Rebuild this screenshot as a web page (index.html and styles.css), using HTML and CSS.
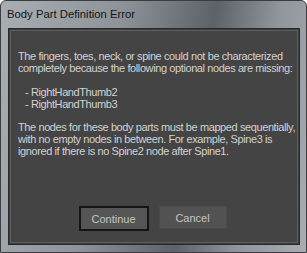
FILE: index.html
```html
<!DOCTYPE html>
<html lang="en">
<head>
    <meta charset="UTF-8">
    <title>Body Part Definition Error</title>
    <link rel="stylesheet" href="styles.css">
</head>
<body>

    <div class="window">
        <div class="titlebar">Body Part Definition Error</div>

        <div class="client">
            <div class="panel">
                <p>The fingers, toes, neck, or spine could not be characterized<br>completely because the following optional nodes are missing:</p>
                <ul class="missing">
                    <li>- RightHandThumb2</li>
                    <li>- RightHandThumb3</li>
                </ul>
                <p>The nodes for these body parts must be mapped sequentially,<br>with no empty nodes in between. For example, Spine3 is<br>ignored if there is no Spine2 node after Spine1.</p>

                <div class="buttons">
                    <button class="default">Continue</button>
                    <button>Cancel</button>
                </div>
            </div>
        </div>
    </div>

</body>
</html>
```

FILE: styles.css
```css
body {
    margin: 0;
    background: #ffffff;
    font-family: "Liberation Sans", sans-serif;
}
/* Outer window frame */
.window {
    width: 305px;
    height: 251px;
    border: 1px solid #3a3e42;
    border-radius: 6px 6px 0 0;
    background: linear-gradient(100deg, #a9aeb3 0%, #8d9399 35%, #5c6268 62%, #8f959b 80%, #a8adb2 100%);
    display: flex;
    flex-direction: column;
}
.titlebar {
    height: 27px;
    line-height: 26px;
    padding-left: 6px;
    font-size: 11.3px;
    color: #141414;
}
.client {
    flex: 1;
    margin: 0 6px 7px 7px;
    border: 1px solid #2a2b2c;
    background: #3c3c3c;
    padding: 1px;
}
.panel {
    height: 100%;
    box-sizing: border-box;
    border: 1px solid #5e5e5e;
    background: #444444;
    padding: 19px 0 0 7px;
    font-size: 11px;
    line-height: 12px;
    letter-spacing: -0.4px;
    white-space: nowrap; /* lines are broken by hand */
    color: #d2d2d2;
    display: flex;
    flex-direction: column;
}
.panel p {
    margin: 0;
}
.missing {
    list-style: none;
    margin: 12px 0 11px 7px;
    padding: 0;
}
.buttons {
    margin-top: auto;
    margin-bottom: 11px;
    padding-right: 10px;
    display: flex;
    justify-content: center;
    gap: 10px;
}
button {
    width: 68px;
    height: 23px;
    background: #525252;
    border: 1px solid #4a4a4a;
    color: #c4c4c4;
    font-family: "Liberation Sans", sans-serif;
    font-size: 11px;
    padding: 0;
}
button.default {
    width: 70px;
    height: 25px;
    border: 2px solid #151515;
    background: #555555;
}
```
